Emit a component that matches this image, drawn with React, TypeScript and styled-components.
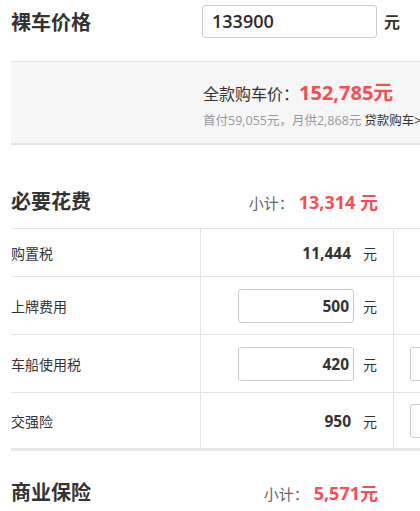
import React from "react";
import styled, { createGlobalStyle } from "styled-components";

const GlobalStyle = createGlobalStyle`
  html, body {
    margin: 0;
    padding: 0;
    overflow: hidden;
    background: #fff;
  }
  body {
    font-family: "Open Sans", "Noto Sans CJK SC", sans-serif;
    color: #333;
  }
`;

const RED = "#fd4b52";

const Page = styled.div`
  padding-left: 11px;
  width: 600px;
`;

const PriceRow = styled.div`
  display: flex;
  align-items: center;
  height: 42px;
`;

const Title = styled.div`
  width: 191px;
  font-size: 20px;
  font-weight: 700;
  color: #333;
`;

const PriceInput = styled.input`
  box-sizing: border-box;
  width: 175px;
  height: 33px;
  border: 1px solid #ccc;
  border-radius: 3px;
  padding: 0 9px;
  font-family: "Open Sans", "Noto Sans CJK SC", sans-serif;
  font-size: 18px;
  font-weight: 600;
  color: #2b2b2b;
  outline: none;
`;

const BoldUnit = styled.span`
  margin-left: 7px;
  font-size: 16px;
  font-weight: 700;
  color: #333;
`;

const SummaryBox = styled.div`
  margin-top: 19px;
  height: 81px;
  background: #f6f6f6;
  border-top: 1px solid #e4e4e4;
  border-bottom: 2px solid #e2e2e2;
  padding-left: 192px;
  display: flex;
  flex-direction: column;
  justify-content: center;
  gap: 4px;
`;

const TotalLine = styled.div`
  display: flex;
  align-items: baseline;
  font-size: 16px;
  color: #333;
  white-space: nowrap;
`;

const TotalValue = styled.span`
  font-size: 20px;
  font-weight: 700;
  color: ${RED};
`;

const LoanLine = styled.div`
  font-size: 12.5px;
  color: #999;
  white-space: nowrap;
`;

const LoanLink = styled.span`
  color: #333;
  margin-left: 3px;
`;

const SectionHeader = styled.div<{ $top: number }>`
  display: flex;
  align-items: center;
  justify-content: space-between;
  width: 367px;
  height: 55px;
  margin-top: ${(p) => p.$top}px;
`;

const Subtotal = styled.div`
  display: flex;
  align-items: baseline;
  gap: 5px;
  white-space: nowrap;
`;

const SubLabel = styled.span`
  font-size: 15px;
  color: #666;
`;

const SubValue = styled.span`
  font-size: 18px;
  font-weight: 700;
  color: ${RED};
`;

const Table = styled.div`
  border-top: 1px solid #e4e4e4;
  border-bottom: 3px solid #e6e6e6;
`;

const Row = styled.div<{ $h: number; $last?: boolean }>`
  box-sizing: border-box;
  display: grid;
  grid-template-columns: 190px 193px 200px;
  height: ${(p) => p.$h}px;
  border-bottom: ${(p) => (p.$last ? "none" : "1px solid #e4e4e4")};
`;

const NameCell = styled.div`
  display: flex;
  align-items: center;
  font-size: 14px;
  color: #333;
  border-right: 1px solid #e4e4e4;
`;

const ValueCell = styled.div`
  display: flex;
  align-items: center;
  justify-content: flex-end;
  padding-right: 16px;
  border-right: 1px solid #e4e4e4;
`;

const ExtraCell = styled.div`
  display: flex;
  align-items: center;
  padding-left: 16px;
`;

const PlainValue = styled.span`
  font-size: 15.5px;
  font-weight: 700;
  color: #333;
  padding-right: 3px;
`;

const ValueInput = styled.input`
  box-sizing: border-box;
  width: 116px;
  height: 34px;
  border: 1px solid #ccc;
  border-radius: 3px;
  padding: 0 4px;
  text-align: right;
  font-family: "Open Sans", "Noto Sans CJK SC", sans-serif;
  font-size: 15.5px;
  font-weight: 700;
  color: #333;
  outline: none;
`;

const Unit = styled.span`
  margin-left: 9px;
  font-size: 14px;
  color: #333;
`;

type Fee = {
  name: string;
  value: string;
  editable: boolean;
  extra: boolean;
  height: number;
};

const FEES: Fee[] = [
  { name: "购置税", value: "11,444", editable: false, extra: false, height: 48 },
  { name: "上牌费用", value: "500", editable: true, extra: false, height: 58 },
  { name: "车船使用税", value: "420", editable: true, extra: true, height: 58 },
  { name: "交强险", value: "950", editable: false, extra: true, height: 55 },
];

export default function App() {
  return (
    <Page>
      <GlobalStyle />
      <PriceRow>
        <Title>裸车价格</Title>
        <PriceInput defaultValue="133900" />
        <BoldUnit>元</BoldUnit>
      </PriceRow>

      <SummaryBox>
        <TotalLine>
          全款购车价：<TotalValue>152,785元</TotalValue>
        </TotalLine>
        <LoanLine>
          首付59,055元，月供2,868元<LoanLink>贷款购车&gt;&gt;</LoanLink>
        </LoanLine>
      </SummaryBox>

      <SectionHeader $top={28}>
        <Title>必要花费</Title>
        <Subtotal>
          <SubLabel>小计：</SubLabel>
          <SubValue>13,314 元</SubValue>
        </Subtotal>
      </SectionHeader>

      <Table>
        {FEES.map((f, i) => (
          <Row key={f.name} $h={f.height} $last={i === FEES.length - 1}>
            <NameCell>{f.name}</NameCell>
            <ValueCell>
              {f.editable ? (
                <ValueInput defaultValue={f.value} />
              ) : (
                <PlainValue>{f.value}</PlainValue>
              )}
              <Unit>元</Unit>
            </ValueCell>
            <ExtraCell>{f.extra && <ValueInput defaultValue="" />}</ExtraCell>
          </Row>
        ))}
      </Table>

      <SectionHeader $top={13}>
        <Title>商业保险</Title>
        <Subtotal>
          <SubLabel>小计：</SubLabel>
          <SubValue>5,571元</SubValue>
        </Subtotal>
      </SectionHeader>
    </Page>
  );
}
